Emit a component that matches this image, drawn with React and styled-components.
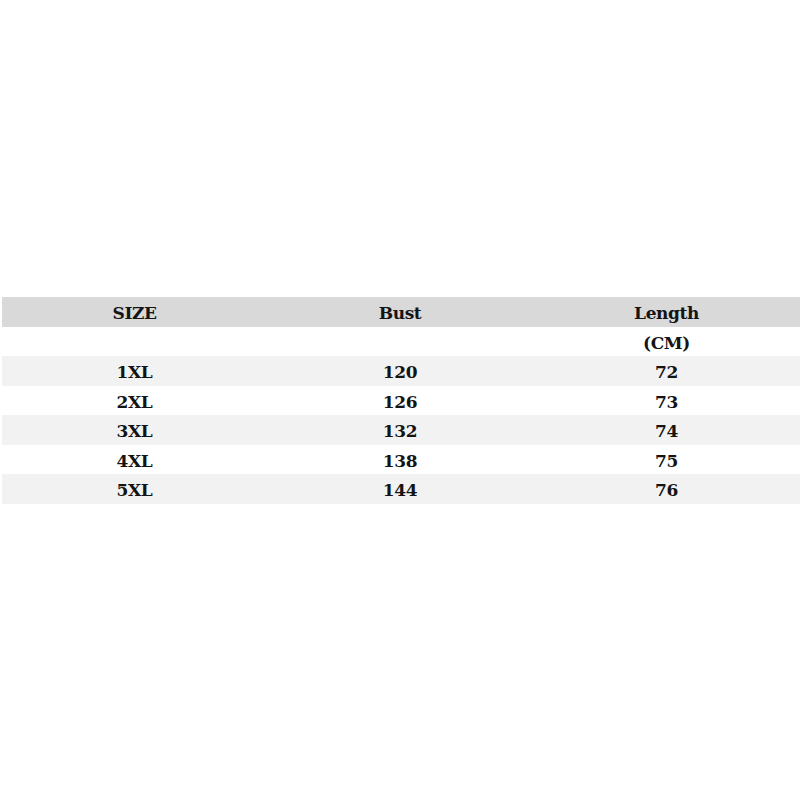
import React from "react";
import styled, { createGlobalStyle } from "styled-components";

const rows = [
  ["1XL", "120", "72"],
  ["2XL", "126", "73"],
  ["3XL", "132", "74"],
  ["4XL", "138", "75"],
  ["5XL", "144", "76"],
];

const App = () => (
  <Page>
    <GlobalStyle />
    <Table>
      <Row $tone="head">
        <Cell>SIZE</Cell>
        <Cell>Bust</Cell>
        <Cell>Length</Cell>
      </Row>
      <Row>
        <Cell />
        <Cell />
        <Cell>(CM)</Cell>
      </Row>
      {rows.map((r, i) => (
        <Row key={r[0]} $tone={i % 2 === 0 ? "alt" : "plain"}>
          {r.map((v) => (
            <Cell key={v}>{v}</Cell>
          ))}
        </Row>
      ))}
    </Table>
  </Page>
);

const GlobalStyle = createGlobalStyle`
  body {
    margin: 0;
    background: #ffffff;
  }
`;

const Page = styled.div`
  width: 800px;
  height: 800px;
  padding-top: 297px;
  box-sizing: border-box;
`;

const Table = styled.div`
  margin-left: 2px;
  display: flex;
  flex-direction: column;
`;

const tones = {
  head: "#d9d9d9",
  alt: "#f2f2f2",
  plain: "#ffffff",
};

const Row = styled.div`
  display: grid;
  grid-template-columns: 265px 266px 267px;
  height: 29.5px;
  align-items: center;
  background-color: ${({ $tone }) => tones[$tone] || tones.plain};
`;

const Cell = styled.div`
  padding-top: 3px;
  text-align: center;
  font-family: "DejaVu Serif", serif;
  font-weight: bold;
  font-size: 17px;
  color: #141414;
  letter-spacing: -0.4px;
`;

export default App;
